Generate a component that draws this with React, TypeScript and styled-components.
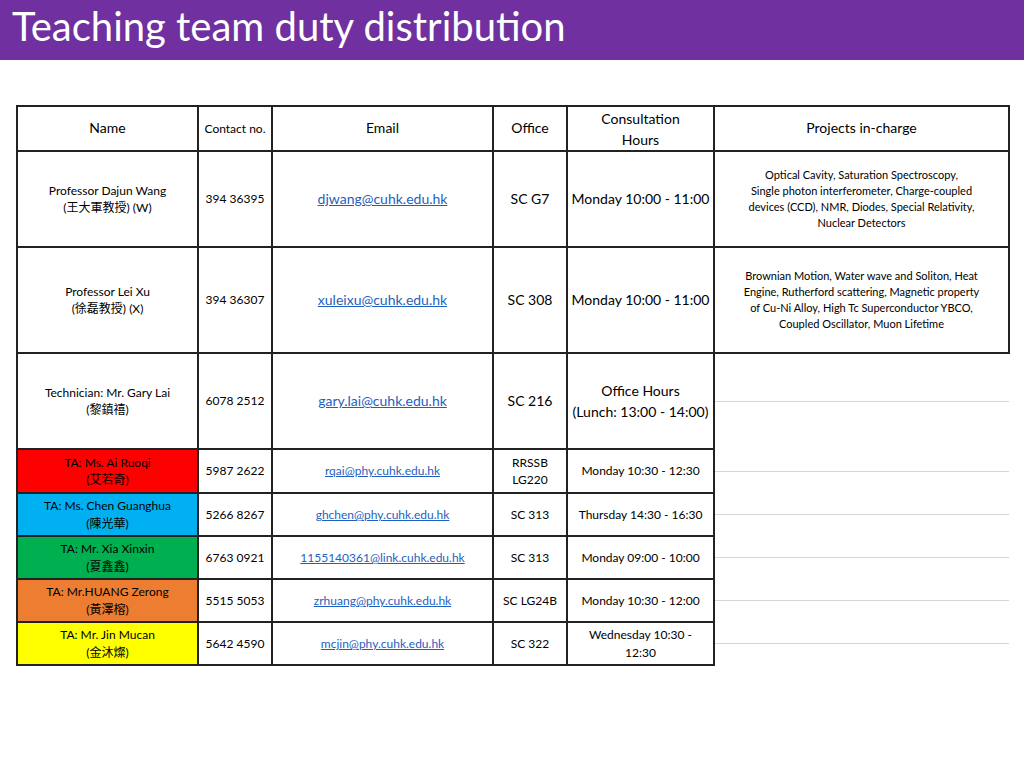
import * as React from 'react';
import styled, { createGlobalStyle } from 'styled-components';

const Global = createGlobalStyle`
	body { margin: 0; background: #fff; font-family: Lato, "Noto Sans CJK TC", sans-serif; }
`;

const TitleBar = styled.div`
	height: 60px;
	background: #7030a0;
	color: #fff;
	font-size: 40px;
	line-height: 52px;
	padding-left: 12px;
	box-sizing: border-box;
`;

const Table = styled.table`
	margin: 45px 0 0 16px;
	width: 992px;
	border-collapse: collapse;
	table-layout: fixed;
	font-size: 12px;
	color: #000;
`;

const Cell = styled.td<{ $bg?: string; $size?: number }>`
	border: 2px solid #222;
	text-align: center;
	vertical-align: middle;
	padding: 0 2px;
	line-height: 1.45;
	background: ${(p) => p.$bg ?? 'transparent'};
	font-size: ${(p) => (p.$size ?? 12)}px;
`;

const HeadCell = styled(Cell)`
	font-size: 14px;
`;

const Mail = styled.span<{ $size?: number }>`
	color: #1f5fbf;
	text-decoration: underline;
	font-size: ${(p) => (p.$size ?? 14)}px;
`;

const EmptyCell = styled.td`
	padding: 0;
	border-left: 2px solid #222;
`;

const SubGrid = styled.div`
	display: grid;
	grid-template-columns: repeat(4, 1fr);
	height: 100%;
`;

const Sub = styled.div`
	border-right: 1px solid #d6d6d6;
	border-bottom: 1px solid #d6d6d6;
`;

const Empty = () => (
	<EmptyCell>
		<SubGrid style={{ height: '100%' }}>
			<Sub /><Sub /><Sub /><Sub />
		</SubGrid>
	</EmptyCell>
);

interface Ta { name: string; cn: string; bg: string; phone: string; mail: string; office: React.ReactNode; hours: React.ReactNode }

const tas: Ta[] = [
	{ name: 'TA: Ms. Ai Ruoqi', cn: '(艾若奇)', bg: '#ff0000', phone: '5987 2622', mail: 'rqai@phy.cuhk.edu.hk', office: <>RRSSB<br />LG220</>, hours: 'Monday 10:30 - 12:30' },
	{ name: 'TA: Ms. Chen Guanghua', cn: '(陳光華)', bg: '#00b0f0', phone: '5266 8267', mail: 'ghchen@phy.cuhk.edu.hk', office: 'SC 313', hours: 'Thursday 14:30 - 16:30' },
	{ name: 'TA: Mr. Xia Xinxin', cn: '(夏鑫鑫)', bg: '#00b050', phone: '6763 0921', mail: '1155140361@link.cuhk.edu.hk', office: 'SC 313', hours: 'Monday 09:00 - 10:00' },
	{ name: 'TA: Mr.HUANG Zerong', cn: '(黃澤榕)', bg: '#ed7d31', phone: '5515 5053', mail: ' zrhuang@phy.cuhk.edu.hk', office: 'SC LG24B', hours: 'Monday 10:30 - 12:00' },
	{ name: 'TA: Mr. Jin Mucan', cn: '(金沐燦)', bg: '#ffff00', phone: '5642 4590', mail: 'mcjin@phy.cuhk.edu.hk', office: 'SC 322', hours: <>Wednesday 10:30 -<br />12:30</> },
];

export default function App() {
	return (
		<>
			<Global />
			<TitleBar>Teaching team duty distribution</TitleBar>
			<Table>
				<colgroup>
					<col style={{ width: 181 }} />
					<col style={{ width: 74 }} />
					<col style={{ width: 221 }} />
					<col style={{ width: 74 }} />
					<col style={{ width: 147 }} />
					<col style={{ width: 295 }} />
				</colgroup>
				<tbody>
					<tr style={{ height: 45 }}>
						<HeadCell>Name</HeadCell>
						<Cell>Contact no.</Cell>
						<HeadCell>Email</HeadCell>
						<HeadCell>Office</HeadCell>
						<HeadCell style={{ lineHeight: 1.5 }}>Consultation<br />Hours</HeadCell>
						<HeadCell>Projects in-charge</HeadCell>
					</tr>
					<tr style={{ height: 96 }}>
						<Cell>Professor Dajun Wang<br />(王大軍教授) (W)</Cell>
						<Cell>394 36395</Cell>
						<Cell><Mail>djwang@cuhk.edu.hk</Mail></Cell>
						<Cell $size={14}>SC G7</Cell>
						<Cell $size={14}>Monday 10:00 - 11:00</Cell>
						<Cell $size={11}>Optical Cavity, Saturation Spectroscopy,<br />Single photon interferometer, Charge-coupled<br />devices (CCD), NMR, Diodes, Special Relativity,<br />Nuclear Detectors</Cell>
					</tr>
					<tr style={{ height: 106 }}>
						<Cell>Professor Lei Xu<br />(徐磊教授) (X)</Cell>
						<Cell>394 36307</Cell>
						<Cell><Mail>xuleixu@cuhk.edu.hk</Mail></Cell>
						<Cell $size={14}>SC 308</Cell>
						<Cell $size={14}>Monday 10:00 - 11:00</Cell>
						<Cell $size={11}>Brownian Motion, Water wave and Soliton, Heat<br />Engine, Rutherford scattering, Magnetic property<br />of Cu-Ni Alloy, High Tc Superconductor YBCO,<br />Coupled Oscillator, Muon Lifetime</Cell>
					</tr>
					<tr style={{ height: 96 }}>
						<Cell>Technician: Mr. Gary Lai<br />(黎鎮禧)</Cell>
						<Cell>6078 2512</Cell>
						<Cell><Mail>gary.lai@cuhk.edu.hk</Mail></Cell>
						<Cell $size={14}>SC 216</Cell>
						<Cell $size={14} style={{ lineHeight: 1.5 }}>Office Hours<br />(Lunch: 13:00 - 14:00)</Cell>
						<Empty />
					</tr>
					{tas.map((t, i) => (
						<tr key={t.name} style={{ height: i === 0 ? 44 : 43 }}>
							<Cell $bg={t.bg}>{t.name}<br />{t.cn}</Cell>
							<Cell>{t.phone}</Cell>
							<Cell><Mail $size={12}>{t.mail}</Mail></Cell>
							<Cell>{t.office}</Cell>
							<Cell>{t.hours}</Cell>
							<Empty />
						</tr>
					))}
				</tbody>
			</Table>
		</>
	);
}
